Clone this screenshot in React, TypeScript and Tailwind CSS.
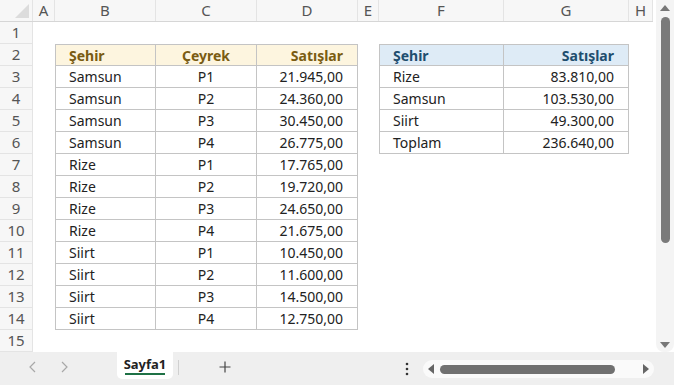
const cols = [
  { key: 'A', w: 'w-[22px]' },
  { key: 'B', w: 'w-[101px]' },
  { key: 'C', w: 'w-[101px]' },
  { key: 'D', w: 'w-[101px]' },
  { key: 'E', w: 'w-[21px]' },
  { key: 'F', w: 'w-[125px]' },
  { key: 'G', w: 'w-[125px]' },
  { key: 'H', w: 'w-[24px]' },
]

const sales: [string, string, string][] = [
  ['Samsun', 'P1', '21.945,00'],
  ['Samsun', 'P2', '24.360,00'],
  ['Samsun', 'P3', '30.450,00'],
  ['Samsun', 'P4', '26.775,00'],
  ['Rize', 'P1', '17.765,00'],
  ['Rize', 'P2', '19.720,00'],
  ['Rize', 'P3', '24.650,00'],
  ['Rize', 'P4', '21.675,00'],
  ['Siirt', 'P1', '10.450,00'],
  ['Siirt', 'P2', '11.600,00'],
  ['Siirt', 'P3', '14.500,00'],
  ['Siirt', 'P4', '12.750,00'],
]

const summary: [string, string][] = [
  ['Rize', '83.810,00'],
  ['Samsun', '103.530,00'],
  ['Siirt', '49.300,00'],
  ['Toplam', '236.640,00'],
]

function Cell({ className = '', children }: { className?: string; children?: React.ReactNode }) {
  return <div className={`h-[22px] shrink-0 flex items-center ${className}`}>{children}</div>
}

function Row({ n }: { n: number }) {
  const idx = n - 3
  const head = n === 2
  const inLeft = n >= 2 && n <= 14
  const inRight = n >= 2 && n <= 6
  const lb = 'border-r border-b border-[#c4c4c4]'
  const lt = head ? 'border-t' : ''
  const yh = 'bg-[#fdf5df] font-bold text-[#7a5c12]'
  const bh = 'bg-[#deebf6] font-bold text-[#1f4e6e]'

  return (
    <div className="flex">
      <Cell className="w-[33px] justify-center text-[#555] text-[15px] bg-[#f7f7f7] border-r border-b border-[#e4e4e4]">{n}</Cell>
      <Cell className="w-[22px]" />
      {inLeft ? (
        <>
          <Cell className={`w-[101px] pl-[13px] border-l ${lb} ${lt} ${head ? yh : ''}`}>
            {head ? 'Şehir' : sales[idx][0]}
          </Cell>
          <Cell className={`w-[101px] justify-center ${lb} ${lt} ${head ? yh : ''}`}>
            {head ? 'Çeyrek' : sales[idx][1]}
          </Cell>
          <Cell className={`w-[101px] justify-end pr-[14px] ${lb} ${lt} ${head ? yh : ''}`}>
            {head ? 'Satışlar' : sales[idx][2]}
          </Cell>
        </>
      ) : (
        <Cell className="w-[303px]" />
      )}
      <Cell className="w-[21px]" />
      {inRight ? (
        <>
          <Cell className={`w-[125px] pl-[13px] border-l ${lb} ${lt} ${head ? bh : ''}`}>
            {head ? 'Şehir' : summary[idx][0]}
          </Cell>
          <Cell className={`w-[125px] justify-end pr-[14px] ${lb} ${lt} ${head ? bh : ''}`}>
            {head ? 'Satışlar' : summary[idx][1]}
          </Cell>
        </>
      ) : (
        <Cell className="w-[250px]" />
      )}
    </div>
  )
}

function App() {
  const rows = Array.from({ length: 15 }, (_, i) => i + 1)
  return (
    <div
      className="w-[674px] h-[385px] overflow-hidden bg-[#efefef] flex flex-col text-[14px] text-[#222]"
      style={{ fontFamily: '"Noto Sans", "Open Sans", sans-serif' }}
    >
      <div className="flex h-[352px]">
        <div className="w-[653px] bg-white flex flex-col overflow-hidden">
          {/* column headers */}
          <div className="flex h-[22px] bg-[#f7f7f7] border-b border-[#d6d6d6] text-[15px] text-[#555]">
            <div className="w-[33px] shrink-0 border-r border-[#e4e4e4] relative">
              <div className="absolute right-[3px] bottom-[3px] w-0 h-0 border-l-[14px] border-l-transparent border-b-[14px] border-b-[#dcdcdc]" />
            </div>
            {cols.map((c) => (
              <div key={c.key} className={`${c.w} shrink-0 flex items-center justify-center border-r border-[#e4e4e4]`}>
                {c.key}
              </div>
            ))}
          </div>
          {rows.map((n) => (
            <Row key={n} n={n} />
          ))}
        </div>
        {/* vertical scrollbar */}
        <div className="w-[21px] bg-white flex justify-end">
          <div className="w-[18px] h-full bg-[#f4f4f4] rounded-b-[8px] flex flex-col items-center pt-[5px] pb-[4px]">
            <div className="w-0 h-0 border-l-[5px] border-l-transparent border-r-[5px] border-r-transparent border-b-[6px] border-b-[#777]" />
            <div className="w-[9px] h-[226px] mt-[6px] rounded-full bg-[#7a7a7a]" />
            <div className="flex-1" />
            <div className="w-0 h-0 border-l-[5px] border-l-transparent border-r-[5px] border-r-transparent border-t-[6px] border-t-[#777]" />
          </div>
        </div>
      </div>

      {/* sheet tabs bar */}
      <div className="flex-1 flex items-start">
        <div className="flex items-center h-[30px] pl-[27px] gap-[19px] text-[#a8a8a8]">
          <svg width="12" height="14" viewBox="0 0 12 14" fill="none" stroke="currentColor" strokeWidth="1.2">
            <path d="M8 2 L3 7 L8 12" />
          </svg>
          <svg width="12" height="14" viewBox="0 0 12 14" fill="none" stroke="currentColor" strokeWidth="1.2">
            <path d="M4 2 L9 7 L4 12" />
          </svg>
        </div>
        <div className="ml-[47px] w-[56px] h-[27px] bg-white rounded-b-[5px] flex flex-col items-center justify-center">
          <span className="text-[13px] font-bold text-[#222] leading-[16px]">Sayfa1</span>
          <div className="w-[40px] h-[2px] bg-[#1e7145] mt-[1px]" />
        </div>
        <div className="w-px h-[15px] bg-[#d0d0d0] mt-[8px] ml-[5px]" />
        <div className="ml-[40px] h-[30px] flex items-center">
          <svg width="12" height="12" viewBox="0 0 12 12" stroke="#444" strokeWidth="1.2">
            <path d="M6 0.5 V11.5 M0.5 6 H11.5" />
          </svg>
        </div>
        <div className="ml-[174px] h-[33px] flex items-center">
          <svg width="4" height="14" viewBox="0 0 4 14" fill="#333">
            <circle cx="2" cy="2" r="1.3" />
            <circle cx="2" cy="7" r="1.3" />
            <circle cx="2" cy="12" r="1.3" />
          </svg>
        </div>
        <div className="ml-[14px] mt-[8px] w-[231px] h-[18px] bg-[#fafafa] rounded-full flex items-center px-[5px]">
          <div className="w-0 h-0 border-t-[5px] border-t-transparent border-b-[5px] border-b-transparent border-r-[6px] border-r-[#666]" />
          <div className="ml-[6px] w-[175px] h-[9px] rounded-full bg-[#707070]" />
          <div className="flex-1" />
          <div className="w-0 h-0 border-t-[5px] border-t-transparent border-b-[5px] border-b-transparent border-l-[6px] border-l-[#666]" />
        </div>
      </div>
    </div>
  )
}

export default App
